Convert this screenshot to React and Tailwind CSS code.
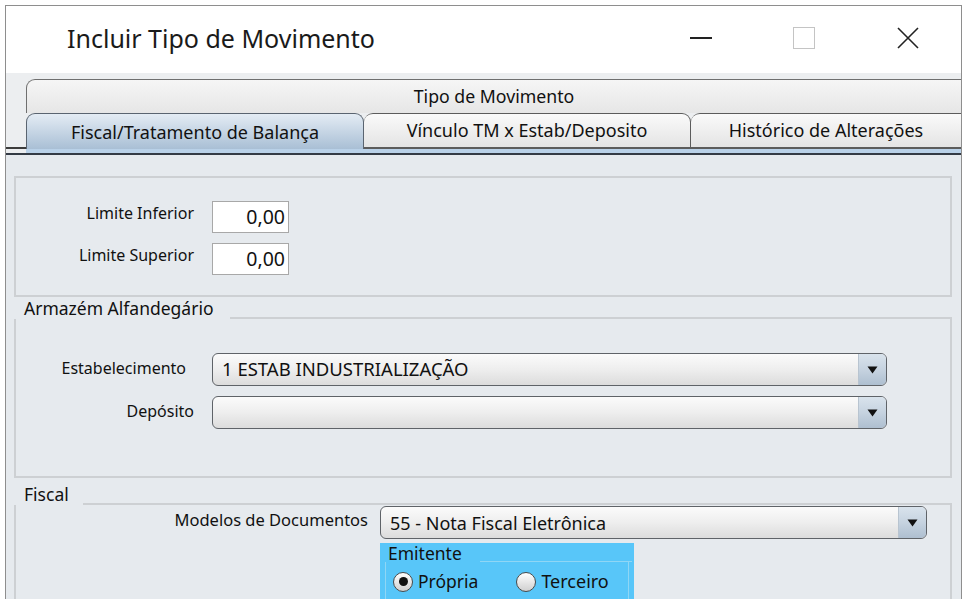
import React from "react";

const F = { fontFamily: '"Noto Sans", "Open Sans", sans-serif' };

function Combo({ value, className = "", textSize = "text-[18.5px]" }) {
  return (
    <div
      className={
        "flex h-[33px] rounded-[6px] border border-[#5f6368] overflow-hidden bg-gradient-to-b from-[#fbfbfb] via-[#eeeeee] to-[#dcdcdc] " +
        className
      }
    >
      <div className={"flex-1 flex items-center pl-[9px] text-[#111] leading-none " + textSize}>
        {value}
      </div>
      <div className="w-[28px] flex items-center justify-center border-l border-[#b8c4d0] bg-gradient-to-b from-[#d9e3ec] via-[#c6d3e0] to-[#aebfd0]">
        <svg width="11" height="8" viewBox="0 0 11 8">
          <path d="M0.5 0.5 L10.5 0.5 L5.5 7.5 Z" fill="#111" />
        </svg>
      </div>
    </div>
  );
}

function Radio({ checked }) {
  return (
    <div className="w-[20px] h-[20px] rounded-full border border-[#4a4a4a] bg-gradient-to-b from-[#ffffff] to-[#d0d0d0] flex items-center justify-center shrink-0">
      {checked && <div className="w-[9px] h-[9px] rounded-full bg-[#111]" />}
    </div>
  );
}

export default function App() {
  return (
    <div
      className="w-[966px] h-[599px] bg-white overflow-hidden pl-[5px] pt-[5px] pr-[4px]"
      style={F}
    >
      <div className="h-full flex flex-col border-l border-t border-r border-[#8e8e8e]">
        {/* Title bar */}
        <div className="h-[67px] bg-white flex items-center shrink-0">
          <div className="pl-[61px] text-[25px] text-[#1a1a1a] flex-1 pb-[2px]">
            Incluir Tipo de Movimento
          </div>
          <div className="flex items-center pb-[4px]">
            <div className="w-[22px] h-[2px] bg-[#222] mr-[81px]" />
            <div className="w-[22px] h-[22px] border border-[#c4c4c4] mr-[82px]" />
            <svg width="22" height="22" viewBox="0 0 22 22" className="mr-[42px]">
              <path d="M1 1 L21 21 M21 1 L1 21" stroke="#222" strokeWidth="1.6" />
            </svg>
          </div>
        </div>

        {/* Body */}
        <div className="flex-1 flex flex-col bg-[#e7ebef]">
          {/* Tabs */}
          <div className="flex pt-[6px] bg-[#eceef0]">
            <div className="w-[20px] flex flex-col">
              <div className="flex-1 border-b-2 border-[#3c3c3c]" />
              <div className="h-[4px]" />
            </div>
            <div className="flex-1 flex flex-col">
              <div className="h-[34px] border-t border-l border-[#6f6f6f] rounded-tl-[9px] bg-gradient-to-b from-[#f6f6f6] to-[#e6e6e6] flex items-center justify-center text-[17.7px] text-[#111]">
                Tipo de Movimento
              </div>
              <div className="flex h-[36px]">
                <div className="w-[338px] border-t border-l border-r border-[#5a6470] rounded-t-[9px] bg-gradient-to-b from-[#e4ecf4] to-[#a9bfd5] flex items-center justify-center text-[18px] text-[#111] pt-[1px]">
                  Fiscal/Tratamento de Balança
                </div>
                <div className="w-[327px] border-t border-r border-b-2 border-[#5c5c5c] rounded-t-[9px] bg-gradient-to-b from-[#fafafa] to-[#e4e4e4] flex items-center justify-center text-[18px] text-[#111]">
                  Vínculo TM x Estab/Deposito
                </div>
                <div className="flex-1 border-t border-b-2 border-[#5c5c5c] rounded-tl-[9px] bg-gradient-to-b from-[#fafafa] to-[#e4e4e4] flex items-center justify-center text-[18px] text-[#111]">
                  Histórico de Alterações
                </div>
              </div>
              <div className="h-[4px] bg-[#b9d1e8]" />
            </div>
          </div>
          <div className="h-[2px] bg-[#333a44]" />

          {/* Content */}
          <div className="flex-1 pl-[8px] pr-[9px] pt-[21px] bg-[#e6eaee] flex flex-col text-[#111]">
            {/* Panel 1 */}
            <div className="h-[121px] border-2 border-[#cdd0d3] pt-[23px] flex flex-col gap-[10px]">
              <div className="flex items-center">
                <div className="w-[178px] text-right text-[16px] pb-[8px]">Limite Inferior</div>
                <div className="ml-[18px] w-[77px] h-[32px] bg-white border border-[#a8a8a8] flex items-center justify-end pr-[3px] text-[19.5px]">
                  0,00
                </div>
              </div>
              <div className="flex items-center">
                <div className="w-[178px] text-right text-[16px] pb-[8px]">Limite Superior</div>
                <div className="ml-[18px] w-[77px] h-[32px] bg-white border border-[#a8a8a8] flex items-center justify-end pr-[3px] text-[19.5px]">
                  0,00
                </div>
              </div>
            </div>

            {/* Armazém */}
            <div className="flex items-end h-[22px]">
              <div className="pl-[10px] pr-[16px] text-[17.5px] leading-[20px] pb-[1px]">Armazém Alfandegário</div>
              <div className="flex-1 border-b-2 border-[#cdd0d3]" />
            </div>
            <div className="h-[159px] border-l-2 border-r-2 border-b-2 border-[#cdd0d3] pt-[34px] flex flex-col gap-[10px]">
              <div className="flex items-center">
                <div className="w-[170px] text-right text-[16px] pb-[4px]">Estabelecimento</div>
                <Combo value="1 ESTAB INDUSTRIALIZAÇÃO" className="ml-[26px] w-[675px]" />
              </div>
              <div className="flex items-center">
                <div className="w-[178px] text-right text-[16px] pb-[4px]">Depósito</div>
                <Combo value="" className="ml-[18px] w-[675px]" />
              </div>
            </div>

            {/* Fiscal */}
            <div className="flex items-end h-[27px]">
              <div className="pl-[10px] pr-[14px] text-[17.5px] leading-[20px] pb-[1px]">Fiscal</div>
              <div className="flex-1 border-b-2 border-[#cdd0d3]" />
            </div>
            <div className="flex-1 border-l-2 border-r-2 border-[#cdd0d3] pt-[1px]">
              <div className="flex items-center">
                <div className="w-[352px] text-right text-[16.5px] pb-[4px]">Modelos de Documentos</div>
                <Combo value="55 - Nota Fiscal Eletrônica" textSize="text-[18px]" className="ml-[12px] w-[547px]" />
              </div>
              <div className="ml-[364px] mt-[4px] w-[254px] h-[80px] bg-[#58c6f9] pt-[1px]">
                <div className="flex items-end h-[18px]">
                  <div className="pl-[8px] pr-[18px] text-[17.5px] leading-[18px]">Emitente</div>
                  <div className="flex-1 border-b border-[#8fd6f5] mr-[2px]" />
                </div>
                <div className="mx-[5px] h-[42px] border-l border-r border-b border-[#8fd6f5] flex items-center pb-[2px]">
                  <div className="flex items-center ml-[7px] gap-[5px]">
                    <Radio checked />
                    <span className="text-[17.5px]">Própria</span>
                  </div>
                  <div className="flex items-center ml-[38px] gap-[5px]">
                    <Radio />
                    <span className="text-[18px]">Terceiro</span>
                  </div>
                </div>
              </div>
            </div>
          </div>
        </div>
      </div>
    </div>
  );
}
